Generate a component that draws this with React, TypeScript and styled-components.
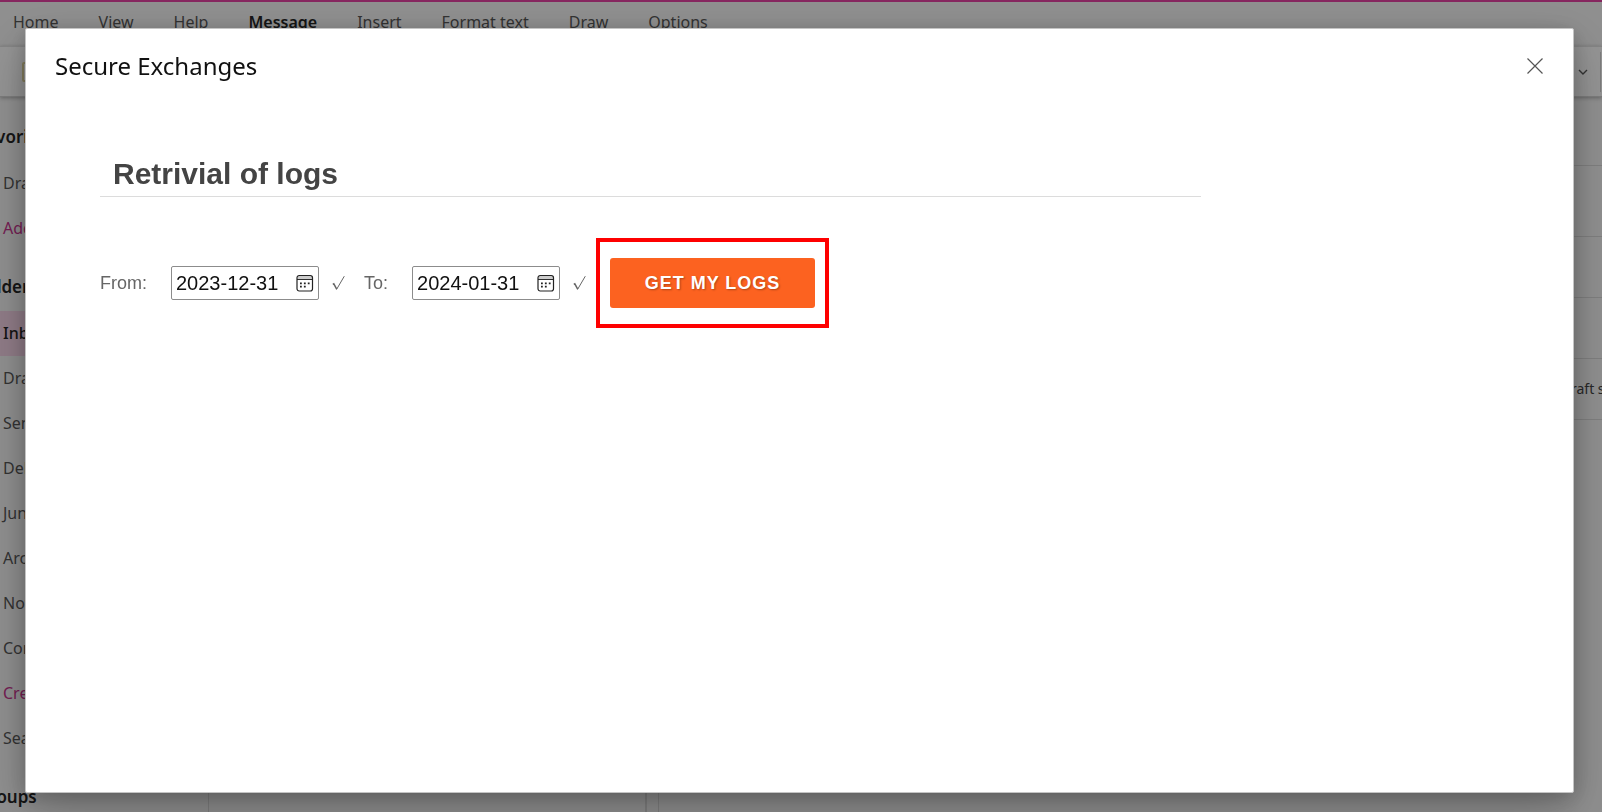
import React from "react";
import styled, { createGlobalStyle } from "styled-components";

const ui = `"Noto Sans", "Open Sans", sans-serif`;
const body = `"Liberation Sans", Arial, sans-serif`;

const GlobalStyle = createGlobalStyle`
  *, *::before, *::after { box-sizing: border-box; }
  body { margin: 0; background: #efefef; overflow: hidden; }
  button, input { font: inherit; }
`;

const Mailbox = styled.div`
  display: flex;
  flex-direction: column;
  height: 100vh;
  overflow: hidden;
  border-top: 2px solid #e0409f;
  background: #efefef;
  color: #424242;
  font: 16px/20px ${ui};
`;

const TabBar = styled.nav`
  display: flex;
  flex: none;
  gap: 40px;
  height: 44px;
  padding: 10px 13px;
`;

const Tab = styled.a<{ $active?: boolean }>`
  color: ${(p) => (p.$active ? "#242424" : "#555")};
  font-weight: ${(p) => (p.$active ? 600 : 400)};
  text-decoration: none;
`;

const Ribbon = styled.div`
  display: flex;
  flex: none;
  align-items: center;
  justify-content: space-between;
  height: 51px;
  padding: 5px 1px 5px 22px;
  border-top: 1px solid #dcdcdc;
  border-bottom: 1px solid #cfcfcf;
  background: #f6f6f6;
  box-shadow: 0 1px 4px rgba(0, 0, 0, 0.3);
`;

const RibbonIcon = styled.span`
  width: 20px;
  height: 20px;
  border: 2px solid #d9cf9a;
  border-radius: 2px;
`;

const RibbonMore = styled.button`
  display: flex;
  align-items: center;
  height: 40px;
  padding: 0 12px 0 0;
  border: 0;
  border-right: 1px solid #d0d0d0;
  background: none;
  color: #555;
`;

const Panes = styled.div`
  display: flex;
  flex: 1;
  min-height: 0;
`;

const Folders = styled.aside`
  flex: none;
  width: 209px;
  padding-top: 17px;
  border-right: 1px solid #d4d4d4;
`;

const FolderHeading = styled.h2`
  margin: 0 0 2px -23px;
  color: #242424;
  font: 600 17px/45px ${ui};
`;

const FolderList = styled.ul`
  margin: 0 0 13px;
  padding: 0;
  list-style: none;
`;

const Folder = styled.a<{ $tone?: "selected" | "link" }>`
  display: block;
  padding-left: 3px;
  background: ${(p) => (p.$tone === "selected" ? "#f0cfe2" : "transparent")};
  color: ${(p) => (p.$tone === "link" ? "#c2338a" : p.$tone === "selected" ? "#242424" : "#555")};
  font-weight: ${(p) => (p.$tone === "selected" ? 500 : 400)};
  line-height: 45px;
  text-decoration: none;
`;

const MessageList = styled.section`
  flex: none;
  width: 438px;
  border-right: 2px solid #d4d4d4;
`;

const Compose = styled.section`
  flex: 1;
  margin-left: 11px;
  border-left: 1px solid #d4d4d4;
`;

const ComposeRow = styled.div<{ $height?: number }>`
  display: flex;
  align-items: center;
  justify-content: flex-end;
  height: ${(p) => p.$height ?? 61}px;
  border-bottom: 1px solid #d4d4d4;
  font-size: 14px;
  white-space: nowrap;
`;

const DraftStatus = styled.span`
  margin-right: -34px;
`;

const Overlay = styled.div`
  position: fixed;
  inset: 0;
  display: flex;
  padding: 28px 28px 19px 25px;
  background: rgba(0, 0, 0, 0.4);
`;

const Dialog = styled.section`
  flex: 1;
  border: 1px solid #c4c4c4;
  border-radius: 2px;
  background: #fff;
  box-shadow: 0 20px 50px rgba(0, 0, 0, 0.24), 0 4px 20px rgba(0, 0, 0, 0.2);
`;

const DialogHeader = styled.header`
  display: flex;
  align-items: center;
  justify-content: space-between;
  padding: 21px 29px 0;
`;

const DialogTitle = styled.h1`
  margin: 0;
  color: #111;
  font: 400 24px/32px ${ui};
`;

const CloseButton = styled.button`
  display: flex;
  padding: 0;
  border: 0;
  background: none;
  color: #555;
`;

const LogsForm = styled.form`
  max-width: 1175px;
  padding: 73px 0 0 74px;
  font: 18px/24px ${body};
  color: #666;
`;

const FormTitle = styled.h2`
  margin: 0 0 41px;
  padding: 0 13px 3px;
  border-bottom: 1px solid #dcdcdc;
  color: #444;
  font: 700 30px/38px ${body};
`;

const Controls = styled.div`
  display: flex;
  align-items: center;
`;

const FieldLabel = styled.label`
  flex: none;
  margin-right: 24px;
`;

const DateField = styled.div`
  display: flex;
  flex: none;
  align-items: center;
  width: 148px;
  height: 34px;
  margin-right: 13px;
  padding: 0 4px;
  border: 1px solid #8c8c8c;
  border-radius: 2px;
  background: #fff;
`;

const DateInput = styled.input`
  flex: 1;
  min-width: 0;
  padding: 0;
  border: 0;
  outline: 0;
  background: none;
  color: #111;
  font-size: 20px;
`;

const PickerButton = styled.button`
  display: flex;
  padding: 0;
  border: 0;
  background: none;
  color: #222;
`;

const Valid = styled.span`
  display: flex;
  flex: none;
  margin-right: 19px;

  &:last-of-type { margin-right: 10px; }
`;

const Highlight = styled.div`
  flex: none;
  padding: 16px 10px;
  border: 4px solid #fe0000;
`;

const SubmitButton = styled.button`
  display: block;
  width: 205px;
  height: 50px;
  padding: 0;
  border: 0;
  border-radius: 3px;
  background: #fc6220;
  color: #fff;
  font: 700 18px/24px ${body};
  letter-spacing: 1px;
  text-shadow: 1px 1px 2px rgba(0, 0, 0, 0.3);
`;

const tabs = ["Home", "View", "Help", "Message", "Insert", "Format text", "Draw", "Options"];
const folders = ["Inbox", "Drafts", "Sent Items", "Deleted Items", "Junk Email", "Archive", "Notes", "Conversation History", "Create new folder", "Search Folders"];

function CalendarIcon() {
  return (
    <svg width="18" height="18" viewBox="0 0 18 18" fill="none" stroke="currentColor" aria-hidden="true">
      <path d="M2 3.200h14" stroke="#ccc" strokeWidth="2.4" />
      <rect x="1" y="1.500" width="15.500" height="15.500" rx="2.2" strokeWidth="1.2" />
      <path d="M1 5.400h15.500" strokeWidth="1.1" />
      <path d="M4 9.300h1.800M7.900 9.300h1.800M11.800 9.300h1.800M4 12.700h1.800M7.900 12.700h1.800" strokeWidth="1.800" />
    </svg>
  );
}

function CheckIcon() {
  return (
    <svg width="13" height="16" viewBox="0 0 13 16" fill="none" stroke="#666" aria-hidden="true">
      <path d="M.8 9.4 1.8 8.8 4.7 14.2" strokeWidth="1.5" />
      <path d="M4.5 14.5 12.3 1.2" strokeWidth="1" />
    </svg>
  );
}

function DateControl({ id, label, value }: { id: string; label: string; value: string }) {
  return (
    <>
      <FieldLabel htmlFor={id}>{label}</FieldLabel>
      <DateField>
        <DateInput id={id} defaultValue={value} />
        <PickerButton type="button" aria-label="Open calendar"><CalendarIcon /></PickerButton>
      </DateField>
      <Valid><CheckIcon /></Valid>
    </>
  );
}

export default function App() {
  return (
    <>
      <GlobalStyle />
      <Mailbox>
        <TabBar>
          {tabs.map((t) => <Tab key={t} href="#" $active={t === "Message"}>{t}</Tab>)}
        </TabBar>
        <Ribbon>
          <RibbonIcon />
          <RibbonMore aria-label="More options">
            <svg width="10" height="6" viewBox="0 0 10 6" fill="none" stroke="currentColor" strokeWidth="1.4">
              <path d="m1 1 4 4 4-4" />
            </svg>
          </RibbonMore>
        </Ribbon>
        <Panes>
          <Folders>
            <FolderHeading>Favorites</FolderHeading>
            <FolderList>
              <li><Folder href="#">Drafts</Folder></li>
              <li><Folder href="#" $tone="link">Add favorite</Folder></li>
            </FolderList>
            <FolderHeading>Folders</FolderHeading>
            <FolderList>
              {folders.map((f) => (
                <li key={f}>
                  <Folder href="#" $tone={f === "Inbox" ? "selected" : f.startsWith("Create") ? "link" : undefined}>{f}</Folder>
                </li>
              ))}
            </FolderList>
            <FolderHeading>Groups</FolderHeading>
          </Folders>
          <MessageList />
          <Compose>
            <ComposeRow $height={69} />
            <ComposeRow $height={71} />
            <ComposeRow />
            <ComposeRow />
            <ComposeRow><DraftStatus>Draft saved</DraftStatus></ComposeRow>
          </Compose>
        </Panes>
      </Mailbox>
      <Overlay>
        <Dialog role="dialog" aria-labelledby="dialog-title">
          <DialogHeader>
            <DialogTitle id="dialog-title">Secure Exchanges</DialogTitle>
            <CloseButton aria-label="Close">
              <svg width="18" height="18" viewBox="0 0 18 18" fill="none" stroke="currentColor" strokeWidth="1.2">
                <path d="m1.5 1.5 15 15M16.5 1.5l-15 15" />
              </svg>
            </CloseButton>
          </DialogHeader>
          <LogsForm onSubmit={(e) => e.preventDefault()}>
            <FormTitle>Retrivial of logs</FormTitle>
            <Controls>
              <DateControl id="from" label="From:" value="2023-12-31" />
              <DateControl id="to" label="To:" value="2024-01-31" />
              <Highlight><SubmitButton>GET MY LOGS</SubmitButton></Highlight>
            </Controls>
          </LogsForm>
        </Dialog>
      </Overlay>
    </>
  );
}
